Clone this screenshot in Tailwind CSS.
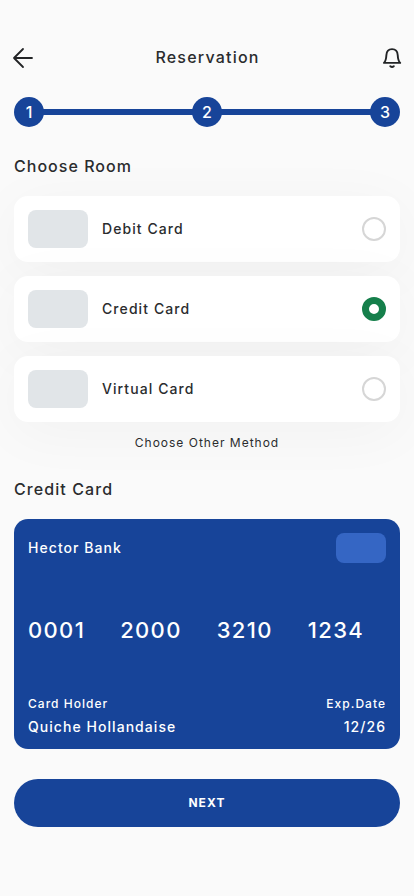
<!DOCTYPE html>
<html lang="en">
<head>
<meta charset="utf-8">
<meta name="viewport" content="width=device-width, initial-scale=1">
<title>Reservation</title>
<script src="https://cdn.jsdelivr.net/npm/@tailwindcss/browser@4"></script>
</head>
<body class="bg-[#fafafa] font-['Inter',sans-serif] text-[#2a2c2e] tracking-[1.05px]">
<main class="w-[414px] h-[896px] px-3.5 pt-[44px] overflow-hidden flex flex-col">
  <header class="relative h-7 flex items-center justify-between shrink-0">
    <button class="-ml-[3px] w-6 h-6" aria-label="Back">
      <svg class="w-6 h-6" viewBox="0 0 24 24" fill="none" stroke="#222426" stroke-width="1.8" stroke-linecap="round" stroke-linejoin="round"><path d="M21 12H3M12 3L3 12l9 9"/></svg>
    </button>
    <h1 class="text-base font-medium leading-6 tracking-[1.2px] -mt-0.5">Reservation</h1>
    <button class="-mr-1 w-6 h-6" aria-label="Notifications">
      <svg class="w-6 h-6" viewBox="0 0 24 24" fill="none" stroke="#222426" stroke-width="1.9" stroke-linecap="round" stroke-linejoin="round"><path d="M3.900 16.900H20.200C18.400 15.200 17.900 12.500 17.700 9C17.500 5.300 15.400 3.100 12.050 3.100S6.600 5.300 6.400 9C6.200 12.500 5.700 15.200 3.900 16.900Z"/><path d="M10.300 20.200Q12.050 21.600 13.800 20.200"/></svg>
    </button>
  </header>
  <div class="mt-[25px] h-[30px] flex items-center shrink-0 text-base font-medium text-white tracking-normal">
    <span class="size-[30px] rounded-full bg-[#174499] flex items-center justify-center">1</span>
    <span class="h-1.5 grow -mx-px bg-[#174499]"></span>
    <span class="size-[30px] rounded-full bg-[#174499] flex items-center justify-center">2</span>
    <span class="h-1.5 grow -mx-px bg-[#174499]"></span>
    <span class="size-[30px] rounded-full bg-[#174499] flex items-center justify-center">3</span>
  </div>
  <h2 class="mt-[27px] h-6 leading-6 text-base font-medium tracking-[1.03px] shrink-0">Choose Room</h2>
  <div class="mt-[18px] flex flex-col gap-3.5 shrink-0 text-sm font-medium tracking-[1.08px]">
    <div class="h-[66px] rounded-[14px] bg-white px-3.5 flex items-center shadow-[0_10px_60px_rgba(0,0,0,0.04)]">
      <span class="w-[60px] h-[38px] rounded-lg bg-[#e1e5e8]"></span>
      <span class="ml-3.5 grow">Debit Card</span>
      <span class="size-6 rounded-full border-2 border-[#d6d6d6]"></span>
    </div>
    <div class="h-[66px] rounded-[14px] bg-white px-3.5 flex items-center shadow-[0_10px_60px_rgba(0,0,0,0.04)]">
      <span class="w-[60px] h-[38px] rounded-lg bg-[#e1e5e8]"></span>
      <span class="ml-3.5 grow">Credit Card</span>
      <span class="size-6 rounded-full border-[7px] border-[#157f4b] bg-white"></span>
    </div>
    <div class="h-[66px] rounded-[14px] bg-white px-3.5 flex items-center shadow-[0_10px_60px_rgba(0,0,0,0.04)]">
      <span class="w-[60px] h-[38px] rounded-lg bg-[#e1e5e8]"></span>
      <span class="ml-3.5 grow">Virtual Card</span>
      <span class="size-6 rounded-full border-2 border-[#d6d6d6]"></span>
    </div>
  </div>
  <p class="mt-3 h-[18px] leading-[18px] text-xs tracking-[1px] text-center shrink-0">Choose Other Method</p>
  <h2 class="mt-[25px] h-6 leading-6 text-base font-medium tracking-[1.08px] shrink-0">Credit Card</h2>
  <section class="mt-[18px] h-[230px] rounded-[14px] bg-[#174499] text-white px-3.5 pt-3.5 pb-3 flex flex-col shrink-0">
    <div class="flex items-center justify-between h-[30px]">
      <span class="text-sm font-medium">Hector Bank</span>
      <span class="w-[50px] h-[30px] rounded-lg bg-[#3566c4]"></span>
    </div>
    <div class="mt-[53px] h-7 leading-7 text-[22px] font-medium tracking-[1.35px] flex gap-[35px]">
      <span>0001</span><span>2000</span><span>3210</span><span>1234</span>
    </div>
    <div class="mt-auto">
      <div class="flex justify-between text-xs font-medium tracking-[1.03px] h-[18px] leading-[18px]"><span>Card Holder</span><span>Exp.Date</span></div>
      <div class="flex justify-between text-sm font-medium leading-5 mt-1"><span>Quiche Hollandaise</span><span>12/26</span></div>
    </div>
  </section>
  <button class="mt-[30px] h-12 rounded-full bg-[#174499] text-white text-xs font-bold tracking-[1.1px] shrink-0">NEXT</button>
</main>
</body>
</html>
